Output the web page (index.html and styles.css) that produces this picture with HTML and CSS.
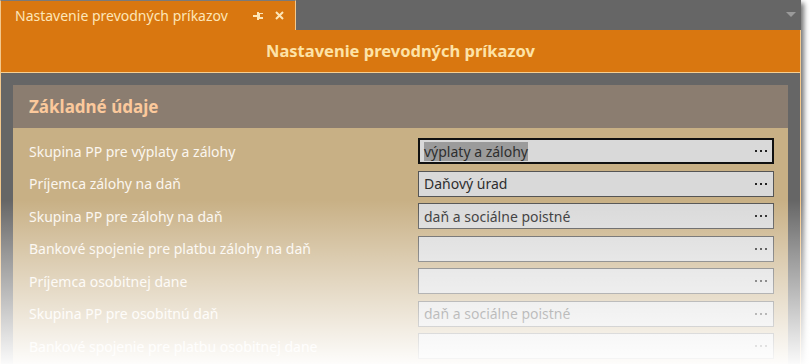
FILE: index.html
```html
<!DOCTYPE html>
<html lang="sk">
<head>
    <meta charset="UTF-8">
    <title>Nastavenie prevodných príkazov</title>
    <link rel="stylesheet" href="styles.css">
</head>
<body>
    <div class="window">
        <div class="tabstrip">
            <div class="tab">
                <span class="tab-title">Nastavenie prevodných príkazov</span>
                <svg class="pin" width="10" height="8" viewBox="0 0 10 8">
                    <rect x="0" y="3" width="4" height="2" fill="#fde6b8"/>
                    <rect x="4" y="0" width="2" height="8" fill="#fde6b8"/>
                    <rect x="6" y="1" width="4" height="6" fill="#fde6b8"/>
                    <rect x="7" y="2" width="3" height="3" fill="#d97710"/>
                </svg>
                <svg class="close" width="9" height="9" viewBox="0 0 9 9">
                    <path d="M1 1 L8 8 M8 1 L1 8" stroke="#fde6b8" stroke-width="2"/>
                </svg>
            </div>
            <div class="strip-fill">
                <svg class="menu-arrow" width="10" height="6" viewBox="0 0 10 6">
                    <path d="M0 0 H10 L5 5 Z" fill="#9a9a9a"/>
                </svg>
            </div>
        </div>

        <div class="frame">
            <div class="header">Nastavenie prevodných príkazov</div>

            <div class="content">
                <div class="group">
                    <div class="group-title">Základné údaje</div>
                    <div class="group-body">
                        <div class="row">
                            <label>Skupina PP pre výplaty a zálohy</label>
                            <div class="field focused"><span class="value selected">výplaty a zálohy</span><span class="dots"></span></div>
                        </div>
                        <div class="row">
                            <label>Príjemca zálohy na daň</label>
                            <div class="field"><span class="value">Daňový úrad</span><span class="dots"></span></div>
                        </div>
                        <div class="row">
                            <label>Skupina PP pre zálohy na daň</label>
                            <div class="field"><span class="value">daň a sociálne poistné</span><span class="dots"></span></div>
                        </div>
                        <div class="row">
                            <label>Bankové spojenie pre platbu zálohy na daň</label>
                            <div class="field"><span class="value"></span><span class="dots"></span></div>
                        </div>
                        <div class="row">
                            <label>Príjemca osobitnej dane</label>
                            <div class="field"><span class="value"></span><span class="dots"></span></div>
                        </div>
                        <div class="row">
                            <label>Skupina PP pre osobitnú daň</label>
                            <div class="field"><span class="value">daň a sociálne poistné</span><span class="dots"></span></div>
                        </div>
                        <div class="row">
                            <label>Bankové spojenie pre platbu osobitnej dane</label>
                            <div class="field"><span class="value"></span><span class="dots"></span></div>
                        </div>
                    </div>
                </div>
            </div>
        </div>
    </div>
    <div class="fade"></div>
</body>
</html>
```

FILE: styles.css
```css
body {
    margin: 0;
    background-color: #ffffff;
    font-family: "Noto Sans", "Open Sans", sans-serif;
    overflow: hidden;
}
.window {
    width: 801px;
    height: 380px;
    background-color: #666666;
    box-shadow: 3px 3px 5px rgba(0,0,0,0.55);
}
.tabstrip {
    display: flex;
    height: 30px;
}
.tab {
    width: 296px;
    background-color: #d97710;
    border-top: 1px solid #7a7a7a;
    border-left: 1px solid #f3c88c;
    border-right: 1px solid #f3c88c;
    display: flex;
    align-items: center;
    box-sizing: border-box;
}
.tab-title {
    color: #fde6b8;
    font-size: 14px;
    margin-left: 14px;
    flex-grow: 1;
}
.pin {
    margin-right: 12px;
}
.close {
    margin-right: 11px;
}
.strip-fill {
    flex-grow: 1;
    display: flex;
    justify-content: flex-end;
    align-items: center;
}
.menu-arrow {
    margin-right: 5px;
}
.frame {
    border-left: 1px solid #f3c88c;
    border-right: 1px solid #f3c88c;
    height: 350px;
}
.header {
    height: 42px;
    background-color: #d97710;
    border-bottom: 1px solid #f6cf92;
    color: #fde3a7;
    font-weight: bold;
    font-size: 16.5px;
    text-align: center;
    line-height: 42px;
}
.content {
    padding: 12px 12px 0 12px;
}
.group-title {
    height: 43px;
    background-color: #8b7d70;
    color: #fbc99c;
    font-weight: bold;
    font-size: 17px;
    line-height: 43px;
    padding-left: 16px;
}
.group-body {
    background-color: #c8b085;
    padding: 10px 14px 10px 16px;
}
.row {
    display: flex;
    align-items: center;
    justify-content: space-between;
    height: 26px;
    margin-bottom: 6.5px;
}
label {
    color: #fbf6ef;
    font-size: 14px;
}
.field {
    width: 356px;
    height: 26px;
    box-sizing: border-box;
    background-color: #d9d9d9;
    border: 1px solid #555555;
    display: flex;
    align-items: center;
    justify-content: space-between;
    padding: 0 6px 0 5px;
}
.field.focused {
    border: 2px solid #111111;
    padding-left: 4px;
    padding-right: 5px;
}
.value {
    color: #2e2e2e;
    font-size: 14px;
}
.value.selected {
    background-color: #9b9b9b;
}
.dots {
    width: 12px;
    height: 2px;
    background: repeating-linear-gradient(90deg, #222222 0 2px, transparent 2px 5px);
}
.fade {
    position: absolute;
    left: 0;
    top: 200px;
    width: 810px;
    height: 164px;
    background: linear-gradient(rgba(255,255,255,0), rgba(255,255,255,0.35) 35%, rgba(255,255,255,0.97));
}
```
